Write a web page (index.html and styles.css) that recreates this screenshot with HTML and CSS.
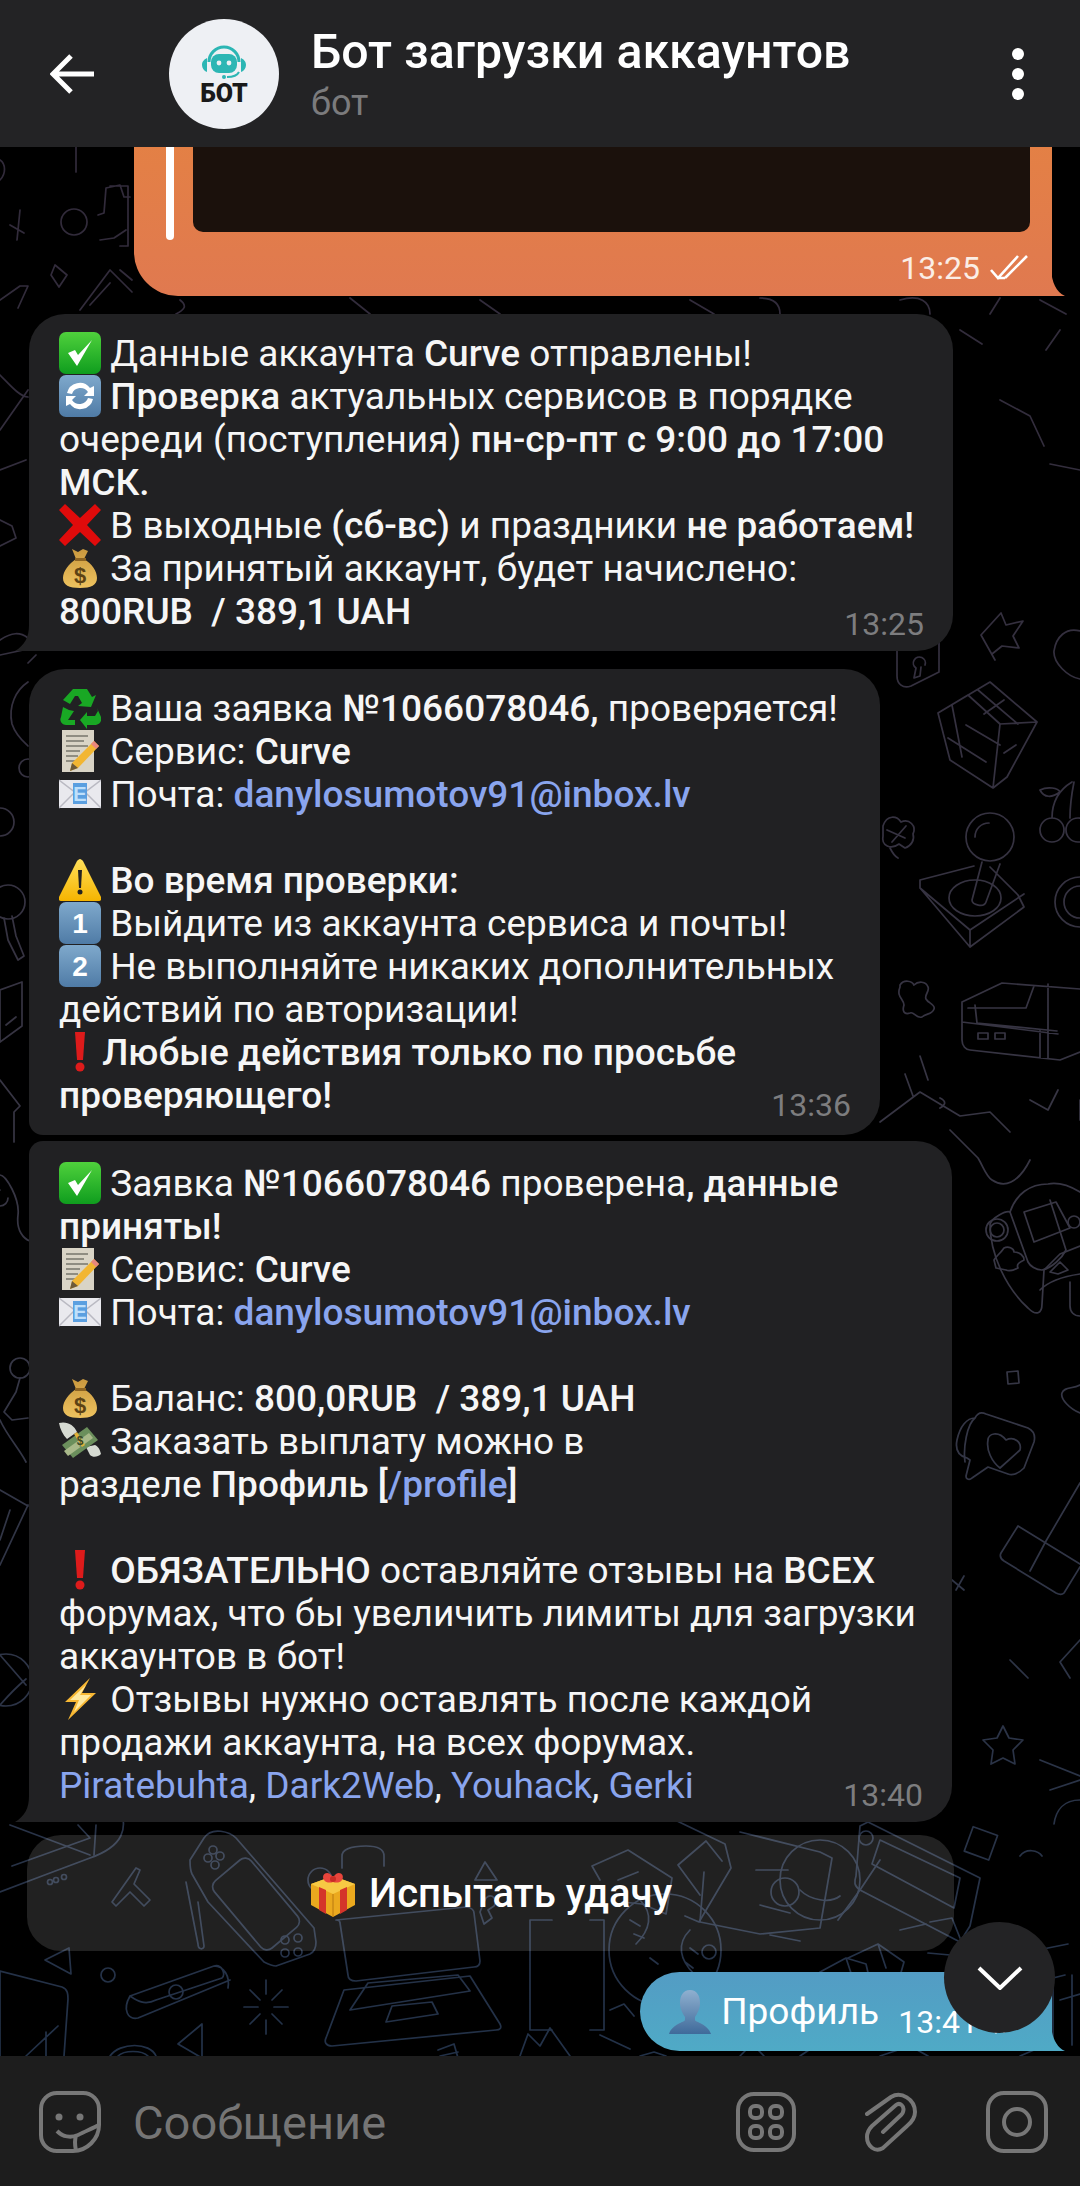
FILE: index.html
```html
<!DOCTYPE html>
<html lang="ru">
<head>
  <meta charset="UTF-8" />
  <meta name="viewport" content="width=device-width, initial-scale=1.0" />
  <title>Бот загрузки аккаунтов</title>
  <link rel="stylesheet" href="styles.css">
</head>
<body>
  <!-- emoji set -->
  <svg class="defs" width="0" height="0">
    <defs>
      <linearGradient id="gGreen" x1="0" y1="0" x2="0" y2="1"><stop offset="0" stop-color="#4fd13c"/><stop offset="1" stop-color="#0f9d1e"/></linearGradient>
      <linearGradient id="gBlue" x1="0" y1="0" x2="0" y2="1"><stop offset="0" stop-color="#7fa9cc"/><stop offset="1" stop-color="#4f7ba6"/></linearGradient>
      <linearGradient id="gPerson" x1="0" y1="0" x2="0" y2="1"><stop offset="0" stop-color="#8fb0d0"/><stop offset="1" stop-color="#3f6a9a"/></linearGradient>
      <linearGradient id="gBag" x1="0" y1="0" x2="0" y2="1"><stop offset="0" stop-color="#c9983e"/><stop offset="1" stop-color="#eec35f"/></linearGradient>
      <linearGradient id="gWarn" x1="0" y1="0" x2="0" y2="1"><stop offset="0" stop-color="#ffe05a"/><stop offset="1" stop-color="#f5b400"/></linearGradient>
      <linearGradient id="gDoodle" gradientUnits="userSpaceOnUse" x1="0" y1="147" x2="0" y2="2056"><stop offset="0" stop-color="#312a3a"/><stop offset=".6" stop-color="#383745"/><stop offset="1" stop-color="#223148"/></linearGradient>

      <symbol id="e-check" viewBox="0 0 42 42"><rect width="42" height="42" rx="7" fill="url(#gGreen)"/><path d="M9 21l9 13L33 8l-14 15-3-5z" fill="#fff"/></symbol>
      <symbol id="e-sync" viewBox="0 0 42 42"><rect width="42" height="42" rx="7" fill="url(#gBlue)"/><path d="M8 18a13 13 0 0 1 23-5l4-2v10H25l4-4a9 9 0 0 0-16 2zM34 24a13 13 0 0 1-23 5l-4 2V21h10l-4 4a9 9 0 0 0 16-2z" fill="#fff"/></symbol>
      <symbol id="e-cross" viewBox="0 0 42 42"><path d="M6 0l15 14L36 0l6 6-14 15 14 15-6 6-15-14L6 42l-6-6 14-15L0 6z" fill="#e00b0b"/></symbol>
      <symbol id="e-bag" viewBox="0 0 42 42"><path d="M13 2l6 3 5-3 5 2-4 8c8 5 13 12 13 19 0 7-6 10-17 10S4 38 4 31c0-7 6-14 13-19z" fill="url(#gBag)"/><path d="M16 11h11v3H16z" fill="#8d6422"/><text x="21" y="36" class="emo-text" font-size="22" fill="#5c4214" text-anchor="middle">$</text></symbol>
      <symbol id="e-recycle" viewBox="0 0 42 42"><path d="M14 2h14l5 8 4-2-5 12-13-1 4-3-4-7h-3l-5 8L4 13zM4 20l6 3 5 1-6 9h7v5H7c-4 0-7-4-5-8zM38 21l4 9c1 4-1 7-5 8h-9v4l-7-9 7-8v4h8l3-5z" fill="#19a824"/></symbol>
      <symbol id="e-memo" viewBox="0 0 42 42"><rect x="3" width="32" height="42" fill="#d9d4c6"/><path d="M7 6h22M7 11h18M7 16h22M7 21h14M7 26h12M7 31h10" stroke="#77756c" stroke-width="1.4"/><path d="M35 11l5 5-21 22-8 3 2-8z" fill="#f2b632"/><path d="M35 11l5 5-3 3-5-5z" fill="#e8877d"/><path d="M11 41l2-8 6 5z" fill="#6d5a3a"/></symbol>
      <symbol id="e-mail" viewBox="0 0 42 42"><rect y="7" width="42" height="28" fill="#e9e9ee"/><path d="M0 7l21 16L42 7M0 35l15-15M42 35L27 20" fill="none" stroke="#b9b9c2" stroke-width="1.5"/><rect x="14" y="10" width="14" height="21" fill="#5b9fe0"/><text x="21" y="28" class="emo-text" font-size="20" fill="#bfe0fb" text-anchor="middle">E</text></symbol>
      <symbol id="e-warn" viewBox="0 0 42 42"><path d="M21 0c1 0 2 1 3 2l18 36c1 2 0 4-2 4H2c-2 0-3-2-2-4L18 2c1-1 2-2 3-2z" fill="url(#gWarn)"/><path d="M19 11h4l-1 18h-2z" fill="#222"/><circle cx="21" cy="33" r="2.5" fill="#222"/></symbol>
      <symbol id="e-one" viewBox="0 0 42 42"><rect width="42" height="42" rx="7" fill="url(#gBlue)"/><text x="21" y="31" class="emo-text" font-size="28" fill="#fff" text-anchor="middle">1</text></symbol>
      <symbol id="e-two" viewBox="0 0 42 42"><rect width="42" height="42" rx="7" fill="url(#gBlue)"/><text x="21" y="31" class="emo-text" font-size="28" fill="#fff" text-anchor="middle">2</text></symbol>
      <symbol id="e-excl" viewBox="0 0 42 42"><path d="M16 1h10l-2 28h-6z" fill="#dd1b1b"/><circle cx="21" cy="36" r="4.5" fill="#dd1b1b"/></symbol>
      <symbol id="e-wings" viewBox="0 0 42 42"><path d="M0 3c8-2 15 2 18 9L8 19C4 15 1 9 0 3zM42 34c-3 3-8 4-11 1l-4-8 9-2c4 2 5 5 6 9z" fill="#d6dad2"/><path d="M3 25L28 7l11 13-25 18z" fill="#6b8f5c"/><path d="M5 31L30 13l4 5-25 18z" fill="#a9b98a"/><path d="M15 14l8 13 3-2-8-13z" fill="#e0b13a"/><text x="21" y="25" class="emo-text" font-size="12" fill="#3b4a2a" text-anchor="middle">$</text></symbol>
      <symbol id="e-bolt" viewBox="0 0 42 42"><path d="M31 0L6 24h11L9 42l28-27H23z" fill="#f7b733"/><path d="M27 7L11 22h9l-5 12 17-17H21z" fill="#ffe9a0"/></symbol>
      <symbol id="e-gift" viewBox="0 0 48 48"><path d="M2 15l22-8 22 8v21L24 48 2 36z" fill="#eba91e"/><path d="M2 15l22 10 22-10-22-8z" fill="#f7c944"/><path d="M24 25v23" stroke="#b87810" stroke-width="1"/><path d="M10 18l7 3v24l-7-4zM31 21l7-3v23l-7 4z" fill="#d4342a"/><path d="M15 11c-3-5 2-9 6-6l3 3 3-3c4-3 9 1 6 6-2 3-6 3-9 2-3 1-7 1-9-2z" fill="#e8453c"/><circle cx="24" cy="10" r="3" fill="#c72c26"/></symbol>
      <symbol id="e-person" viewBox="0 0 44 44"><path d="M22 0c7 0 10 6 10 13 0 6-3 11-5 14v3c0 2 13 4 16 14H1c3-10 16-12 16-14v-3c-2-3-5-8-5-14C12 6 15 0 22 0z" fill="url(#gPerson)"/></symbol>
    </defs>
  </svg>

  <div class="phone">
    <!-- wallpaper -->
    <svg class="doodles" viewBox="0 0 1080 2186" width="1080" height="2186" fill="none" stroke="url(#gDoodle)" stroke-width="1.7" stroke-linejoin="round" stroke-linecap="round">
      <!-- top strip -->
      <path d="M76 147v25"/>
      <path d="M0 160c6 4 6 14 0 20"/>
      <path d="M10 225l14 8M20 210l-3 30"/>
      <circle cx="74" cy="222" r="13"/>
      <path d="M98 215l6-2 2-25 14-3 4 12 6 0M100 240l14-2 12-8M110 186h18v60h-8"/>
      <path d="M55 265l12 10-8 12-8-12z"/>
      <path d="M0 300l20-14h8l-10 22M80 310l30-40 22 22M90 305l20-22M120 270l12 10"/>
      <path d="M180 300c8 6 4 10-4 14M350 298l20 16M480 300l20 14M690 300l24 14M760 298c16 0 20 8 20 16M900 300c20-6 30 2 30 14M1000 298l-10 16M1040 300l26 14"/>
      <!-- left strip -->
      <path d="M0 375c10 10 20 22 28 22M0 430l28-40M0 470l26-10"/>
      <path d="M0 520l12 6 4 12-16 8"/>
      <path d="M0 640c12-8 20-8 28-2M0 655l28-6M36 655l-8 8"/>
      <path d="M28 682c-12 8-20 24-16 42 4 12 14 20 16 22"/>
      <circle cx="28" cy="768" r="9"/>
      <circle cx="0" cy="822" r="14"/>
      <circle cx="8" cy="902" r="17"/>
      <path d="M12 916l4 20 8 20-6 4-10-20-4-22"/>
      <path d="M0 990l22-8v44l-22 16zM6 1025l10-8"/>
      <path d="M0 1080l20 26-6 6v30"/>
      <path d="M0 1175c6 0 20 24 18 40-2 16 6 24 12 26M0 1190a8 8 0 1 0 8 8"/>
      <circle cx="20" cy="1368" r="10"/>
      <path d="M20 1378l-4 14-12 20 8 8 16-2M0 1420c6 14 20 30 26 42"/>
      <path d="M0 1490l28 16M0 1565l28-60M0 1540l10-30"/>
      <circle cx="6" cy="1680" r="26"/><path d="M0 1655c14 16 26 30 26 30M0 1705c14-16 26-26 26-26"/>
      <!-- right column -->
      <path d="M960 330l22 14M1060 330l-14 20M1000 400l30 16 14 30M1080 470l-30-6"/>
      <path d="M897 630v46c0 8 6 13 14 10l28-14v-42M925 665a6 6 0 1 0-9 3l-2 10 6-2 1-9"/>
      <path d="M995 660l-14-25 20-22 5 12 17-4-10 15 6 12-17-2-10 8"/>
      <path d="M1080 631c-14-4-24 6-26 20-1 12 14 26 26 28"/>
      <path d="M938 713l52-31 47 40-30 55-14 11-43-28zM938 713l30-18 32 29-7 64M938 713l12 47M968 695l32 29M952 705l10 52M966 725l34 20M948 738l38 24M978 690l40 34M1000 724l37-2M1004 700l-20 14M1016 745l-12 8"/>
      <path d="M1040 830a12 12 0 1 0 24 0 12 12 0 1 0-24 0M1066 830a12 12 0 1 0 24 0 12 12 0 1 0-24 0M1052 818c0-20 10-30 20-36M1070 818c0-14 2-26 4-36M1040 790c8-4 18-2 20 2-8 6-16 6-20-2z"/>
      <path d="M883 826c4-12 14-10 18-4 8-4 16 4 12 12 2 6-2 12-8 14l-6-4c-8 6-18 2-16-8zM890 848c2 4 4 8 8 10M887 830l18 8M906 826l-14 16"/>
      <circle cx="990" cy="837" r="24"/><path d="M975 837c0-8 6-14 14-14"/>
      <path d="M982 862l-10 38c0 5 12 8 14 2l14-38M920 880l54-14M920 880v8l50 59 54-40-6-12-28-28M920 888l50 42 54-36M970 930v17"/>
      <ellipse cx="975" cy="898" rx="26" ry="18"/>
      <circle cx="1080" cy="902" r="25"/><circle cx="1080" cy="902" r="16"/>
      <path d="M900 985c4-6 12-4 14 0 4-4 12-4 14 2 2 4-4 8-2 12s10 6 8 10c-2 6-8 4-12 8-6 2-8-6-12-4-6 2-8-2-6-8 0-6-8-8-4-18z"/>
      <path d="M962 1002l40-19 78 6M962 1002v38c0 6 4 10 8 10l90 10 20-8M968 1008h58l8-22M975 1005l2 18 80 8M962 1022l96 12M1040 1030v28M1048 984v74"/>
      <rect x="978" y="1033" width="10" height="6"/><rect x="995" y="1033" width="10" height="6"/>
      <path d="M880 1122l40-30 40 24 30-4 20 20M905 1074l8 22M920 1056l8 24"/>
      <path d="M1030 1100l18 10 10-20M1080 1100v20M940 1098c8 4 4 8 0 10"/>
      <path d="M950 1130l28 28c6 10 8 18 14 22 12 8 26 4 38-20"/>
      <path d="M1080 1192c-10-6-22-10-32-8-18 0-32 10-38 28-4-2-18 6-20 12 0 30 16 64 38 84 8 8 14 6 14-4l2-34 16-16 20-8"/>
      <circle cx="997" cy="1230" r="11"/><circle cx="997" cy="1230" r="7"/>
      <path d="M1010 1212l18 50c2 4 8 8 14 8 10-2 20-12 24-20l-16-50"/>
      <path d="M1024 1212l32-10 14 26-36 14z"/>
      <path d="M1004 1248c4-2 10 0 10 4 6 0 10 4 10 8-4 2-8 4-6 8-4 2-8 4-12 2l-10-2-2-8c2-4 6-6 10-12z"/>
      <circle cx="1074" cy="1222" r="6"/>
      <path d="M1060 1262l8 8-10 4-8-2zM1040 1290c10-10 26-14 40-16M1070 1282v24c0 6 4 10 10 10"/>
      <path d="M1007 1372l11-1 1 12-11 1z"/>
      <path d="M1080 1385c-8 4-16 2-18 8-2 6 8 16 18 20"/>
      <path d="M975 1418c-8 0-15 8-18 22-2 10 2 16 10 18l3 2-4 16c0 4 4 4 6 2l16-11 20 7c6 2 12-2 16-6l10-26c2-8-2-12-6-14l-42-14c-4-2-8-2-11 4zM975 1418c-8 6-12 30-10 44"/>
      <path d="M988 1440c0-6 10-10 18 0 8-4 16 2 14 10l-20 18c-8-6-14-18-12-28z"/>
      <path d="M1018 1526l-17 27c-2 4 0 6 3 8l52 32c4 2 6 2 8 0l16-26M1018 1526l62 38M1046 1541l-16 30M1046 1541l34-58"/>
      <path d="M952 1580l12 10M964 1576l-8 14"/>
      <path d="M1010 1660l18 18M1080 1640l-20 22 10 16"/>
      <path d="M1003 1726l6 12 14 2-10 10 2 14-12-6-12 6 2-14-10-10 14-2z"/>
      <path d="M1040 1760l40 16M1050 1790l30-10"/>
      <rect x="968" y="1830" width="26" height="26" transform="rotate(20 980 1843)"/>
      <path d="M1080 1800c-16 0-24 10-26 24"/>
      <!-- bottom band -->
      <path d="M0 1892l42-16 48-18M12 1866l78-28-12-13M90 1858c34-12 38-30 30-50"/>
      <path d="M10 1825l80 30"/>
      <circle cx="50" cy="1882" r="2.5"/><circle cx="56" cy="1880" r="2.5"/><circle cx="64" cy="1877" r="2.5"/>
      <path d="M96 1825l-2 30"/>
      <path d="M112 1902l24-34 4 2-6 14 16 16-6 6-14-14-14 14z"/>
      <path d="M190 1860l14-22c8-12 26-6 32 0l78 90 2 14c0 6-2 10-6 12l-34 12c-4 0-8-2-12-4l-56-60-16-28c-2-4-2-8-2-14z"/>
      <rect x="232" y="1860" width="48" height="88" rx="8" transform="rotate(-40 256 1904)"/>
      <path d="M186 1882l12 62c0 6 6 6 6 2l-6-44"/>
      <circle cx="213" cy="1850" r="4"/><circle cx="220" cy="1856" r="4"/><circle cx="208" cy="1858" r="4"/><circle cx="215" cy="1865" r="4"/>
      <circle cx="285" cy="1940" r="4"/><circle cx="298" cy="1938" r="4"/><circle cx="285" cy="1953" r="4"/><circle cx="298" cy="1952" r="4"/>
      <path d="M342 1868v-12c0-6 8-10 24-10 14 0 18 4 18 10v10"/>
      <circle cx="320" cy="1880" r="12"/>
      <path d="M45 1960l24-12 2 26zM475 1880l10-18 12 18z"/>
      <path d="M0 1971l62 16c6 2 6 8 6 12l-4 57M0 1971v85M26 2056l32-30M46 2056v-24"/>
      <circle cx="108" cy="1975" r="7"/>
      <path d="M130 1996l84-30c8-2 12 8 8 12l-66 22c-12 6-20 0-26-4zM130 1996c-8 14-2 24 8 22l92-38M214 1966c10 0 16 10 14 22"/>
      <circle cx="176" cy="1992" r="7"/>
      <path d="M266 1980v14M266 2020v14M244 2007h14M274 2007h14M250 1990l10 10M282 1990l-10 10M250 2024l10-10M282 2024l-10-10"/>
      <path d="M178 2044l24-20 0 34z"/>
      <path d="M110 2056c10-14 40-14 46 0M118 2056c6-6 24-6 30 0"/>
      <path d="M336 1920l130-13c6 0 8 4 8 6l6 48c0 4-2 6-6 6l-118 14c-6 0-8-2-8-6l-8-52c0-2-2-3-4-3zM344 1990l126-14 30 48c2 4 0 6-4 6l-164 16c-6 0-8-4-6-8zM350 2010l18-27 90-8 12 16zM386 2022l6-16 40-4 6 12z"/>
      <path d="M438 2050l16-6 4 14M440 2056l18-4"/>
      <path d="M486 1898c6-6 12 2 8 8l-6 4 4 8-8 6-4-12 4-10 2-4z"/>
      <path d="M530 2030v-110h22M590 1920h14v110h-14M530 2030h22"/>
      <circle cx="665" cy="1950" r="56"/>
      <path d="M640 1900c14 14 10 30-4 44M690 1930c-14 14-10 30 4 44M630 1920l10 6M634 1934l10 4M650 1958l8 6M690 1948l8 6M685 1962l8 6"/>
      <circle cx="709" cy="1952" r="7"/>
      <path d="M600 1880l-8-14 36-16 44 28-6 36-24-10-20-2M618 1880l20-8"/>
      <path d="M675 1820l50 24 6 24-32 54-14-6M700 1895l-22-30 28-24 16 20"/>
      <path d="M740 1832l80 20 12 6-12 70-60 6-60-12 4-50M756 1870h32M760 1905l30 8M770 1935l30 6"/>
      <circle cx="820" cy="1880" r="40"/>
      <path d="M800 1890c10 10 30 14 40 6"/><circle cx="866" cy="1838" r="7"/>
      <path d="M838 1920l22-30 20-30"/>
      <circle cx="785" cy="1892" r="14"/>
      <path d="M868 1822l112 56-10 48-10 16-100-52c-6-4-6-8-4-14l4-50zM880 1840l80 38-6 30-82-44z"/>
      <path d="M930 1922l22-4 8 20M962 1942c6-4 12 0 16 4M950 1955l-22-2"/>
      <path d="M820 1972l26-14 20 6 6 26-20 18-32-8zM846 1958l10 30M826 1984l30 4"/>
      <path d="M848 1958l30-14 26 18-8 28-28 14M878 1944l8 24"/>
      <path d="M900 1930l26-6M1020 1856c6-8 18-6 22 0M1068 1944l-40 8M1065 1975l-12 3v70M1072 1975v70M1060 2000l20-6"/>
      <path d="M640 2056l14-4 12 4M740 2056l12-12 12 12M800 2056l12-8M880 2056l30-10 18 10M1020 2056l14-6"/>
      <path d="M520 2056l8-22 12 12 10-18 20 28"/>
      <path d="M610 2010l14-6 10 12M600 2035l30 14"/>
    </svg>

    <header class="topbar">
      <svg class="back-icon" viewBox="0 0 44 40" width="44" height="40" fill="none" stroke="#fff" stroke-width="5"><path d="M21 2L3 20l18 18M3 20h41"/></svg>
      <div class="avatar">
        <svg class="robot" viewBox="0 0 46 36" width="46" height="36">
          <path d="M8 18a15 15 0 0 1 30 0" fill="none" stroke="#2cb6b4" stroke-width="3"/>
          <rect x="10" y="10" width="26" height="19" rx="8" fill="#2cb6b4"/>
          <circle cx="18" cy="19" r="2.4" fill="#eef0f4"/><circle cx="28" cy="19" r="2.4" fill="#eef0f4"/>
          <path d="M1 21c0-4 3-6 5-7v14c-3-1-5-4-5-7zM45 21c0-4-3-6-5-7v14c3-1 5-4 5-7z" fill="#2cb6b4"/>
          <path d="M38 28c-2 4-6 5-12 5" fill="none" stroke="#2cb6b4" stroke-width="2"/><circle cx="23" cy="33" r="2" fill="#2cb6b4"/>
        </svg>
        <span class="avatar-label">БОТ</span>
      </div>
      <div class="peer">
        <div class="peer-name">Бот загрузки аккаунтов</div>
        <div class="peer-status">бот</div>
      </div>
      <div class="menu-dots"><i></i><i></i><i></i></div>
    </header>

    <main class="chat">
      <div class="msg out orange">
        <div class="quote-row">
          <div class="quote-bar"></div>
          <div class="quote-image"></div>
        </div>
        <span class="meta out-meta">13:25
          <svg viewBox="0 0 42 26" width="42" height="26" fill="none" stroke="#fff" stroke-width="2.6"><path d="M1 15l7 8L28 1M15 23L37 1M8 23l7 0"/></svg>
        </span>
      </div>

      <div class="msg in first tail-left">
        <svg class="emo"><use href="#e-check"/></svg> Данные аккаунта <b>Curve</b> отправлены!<br>
        <svg class="emo"><use href="#e-sync"/></svg> <b>Проверка</b> актуальных сервисов в порядке<br>
        очереди (поступления) <b>пн-ср-пт с 9:00 до 17:00</b><br>
        <b>МСК.</b><br>
        <svg class="emo"><use href="#e-cross"/></svg> В выходные <b>(сб-вс)</b> и праздники <b>не работаем!</b><br>
        <svg class="emo"><use href="#e-bag"/></svg> За принятый аккаунт, будет начислено:<br>
        <b>800RUB&nbsp; / 389,1 UAH</b>
        <span class="meta">13:25</span>
      </div>

      <div class="msg in second">
        <svg class="emo"><use href="#e-recycle"/></svg> Ваша заявка <b>№1066078046,</b> проверяется!<br>
        <svg class="emo"><use href="#e-memo"/></svg> Сервис: <b>Curve</b><br>
        <svg class="emo"><use href="#e-mail"/></svg> Почта: <a class="link med">danylosumotov91@inbox.lv</a><br>
        <br>
        <svg class="emo"><use href="#e-warn"/></svg> <b>Во время проверки:</b><br>
        <svg class="emo"><use href="#e-one"/></svg> Выйдите из аккаунта сервиса и почты!<br>
        <svg class="emo"><use href="#e-two"/></svg> Не выполняйте никаких дополнительных<br>
        действий по авторизации!<br>
        <svg class="emo tight"><use href="#e-excl"/></svg> <b>Любые действия только по просьбе</b><br>
        <b>проверяющего!</b>
        <span class="meta">13:36</span>
      </div>

      <div class="msg in third tail-left">
        <svg class="emo"><use href="#e-check"/></svg> Заявка <b>№1066078046</b> проверена<b>, данные</b><br>
        <b>приняты!</b><br>
        <svg class="emo"><use href="#e-memo"/></svg> Сервис: <b>Curve</b><br>
        <svg class="emo"><use href="#e-mail"/></svg> Почта: <a class="link med">danylosumotov91@inbox.lv</a><br>
        <br>
        <svg class="emo"><use href="#e-bag"/></svg> Баланс: <b>800,0RUB&nbsp; / 389,1 UAH</b><br>
        <svg class="emo"><use href="#e-wings"/></svg> Заказать выплату можно в<br>
        разделе <b>Профиль [</b><a class="link med">/profile</a><b>]</b><br>
        <br>
        <svg class="emo"><use href="#e-excl"/></svg> <b>ОБЯЗАТЕЛЬНО</b> оставляйте отзывы на <b>ВСЕХ</b><br>
        форумах, что бы увеличить лимиты для загрузки<br>
        аккаунтов в бот!<br>
        <svg class="emo"><use href="#e-bolt"/></svg> Отзывы нужно оставлять после каждой<br>
        продажи аккаунта, на всех форумах.<br>
        <a class="link">Piratebuhta</a>, <a class="link">Dark2Web</a>, <a class="link">Youhack</a>, <a class="link">Gerki</a>
        <span class="meta">13:40</span>
      </div>

      <div class="kb-button"><svg class="emo gift"><use href="#e-gift"/></svg> Испытать удачу</div>

      <div class="msg out blue">
        <svg class="emo person"><use href="#e-person"/></svg> Профиль
        <span class="meta out-meta">13:41
          <svg viewBox="0 0 42 26" width="42" height="26" fill="none" stroke="#fff" stroke-width="2.6"><path d="M1 15l7 8L28 1M15 23L37 1"/></svg>
        </span>
      </div>
    </main>

    <button class="to-bottom">
      <svg viewBox="0 0 46 24" width="46" height="24" fill="none" stroke="#fff" stroke-width="4"><path d="M2 2l21 20L44 2"/></svg>
    </button>

    <footer class="composer">
      <svg class="icon-sticker" viewBox="0 0 62 62" width="62" height="62" fill="none" stroke="#777" stroke-width="4">
        <path d="M18 2h26c9 0 16 7 16 16v16C60 48 48 60 34 60H18C9 60 2 53 2 44V18C2 9 9 2 18 2z"/>
        <path d="M18 40c6 6 14 7 21 4 6-3 15-7 21-10M37 45c-2 5-1 10 0 15"/>
        <circle cx="20" cy="26" r="3.5" fill="#777" stroke="none"/><circle cx="41" cy="26" r="3.5" fill="#777" stroke="none"/>
      </svg>
      <span class="placeholder">Сообщение</span>
      <div class="composer-icons">
        <svg viewBox="0 0 60 60" width="60" height="60" fill="none" stroke="#777" stroke-width="4">
          <rect x="2" y="2" width="56" height="56" rx="16"/>
          <rect x="14" y="14" width="12" height="12" rx="5"/><rect x="34" y="14" width="12" height="12" rx="5"/>
          <rect x="14" y="34" width="12" height="12" rx="5"/><rect x="34" y="34" width="12" height="12" rx="5"/>
        </svg>
        <svg viewBox="0 0 52 60" width="52" height="60" fill="none" stroke="#777" stroke-width="4" stroke-linecap="round">
          <path d="M2 22L26 5c10-6 24 2 24 15 0 6-3 10-8 14L18 56c-8 5-16-2-16-11 0-4 2-8 5-11L31 13c4-3 9 1 7 7 0 1-1 2-2 3L18 40"/>
        </svg>
        <svg viewBox="0 0 62 62" width="62" height="62" fill="none" stroke="#777" stroke-width="4">
          <rect x="2" y="2" width="58" height="58" rx="16"/><circle cx="31" cy="31" r="13"/>
        </svg>
      </div>
    </footer>
  </div>
</body>
</html>
```

FILE: styles.css
```css
* {
  box-sizing: border-box;
}

body {
  margin: 0;
  background: #000;
  font-family: Roboto, "Liberation Sans", sans-serif;
}

.defs {
  position: absolute;
}

.phone {
  position: relative;
  width: 1080px;
  height: 2186px;
  display: flex;
  flex-direction: column;
  overflow: hidden;
  background: #000;
}

.doodles {
  position: absolute;
  top: 0;
  left: 0;
}

/* top bar */
.topbar {
  position: relative;
  z-index: 2;
  height: 147px;
  flex: none;
  display: flex;
  align-items: center;
  background: #232325;
  padding: 0 56px 0 50px;
}

.back-icon {
  flex: none;
}

.avatar {
  width: 110px;
  height: 110px;
  flex: none;
  margin-left: 75px;
  border-radius: 50%;
  background: #eef0f4;
  display: flex;
  flex-direction: column;
  align-items: center;
  padding-top: 25px;
}

.avatar-label {
  font-size: 25px;
  line-height: 24px;
  font-weight: 900;
  color: #1a1a1a;
  margin-top: 2px;
}

.peer {
  margin-left: 32px;
  flex: 1;
}

.peer-name {
  font-size: 48.25px;
  line-height: 56px;
  font-weight: 500;
  color: #fff;
}

.peer-status {
  font-size: 36px;
  line-height: 42px;
  margin-top: 2px;
  color: #7b7b7d;
}

.menu-dots {
  display: flex;
  flex-direction: column;
  gap: 8px;
}

.menu-dots i {
  width: 12px;
  height: 12px;
  border-radius: 50%;
  background: #fff;
}

/* messages */
.chat {
  position: relative;
  flex: 1;
  min-height: 0;
  overflow: hidden;
  display: flex;
  flex-direction: column;
  justify-content: flex-end;
  align-items: flex-start;
  padding-bottom: 5px;
}

.msg {
  position: relative;
  flex: none;
  font-size: 37px;
  line-height: 43px;
  color: #f6f6f6;
  white-space: nowrap;
}

.msg b,
.kb-button {
  font-weight: 500;
}

.msg.in {
  background: #212123;
  padding: 18px 0 17px 30px;
  margin-left: 29px;
  border-radius: 36px;
}

.msg.first {
  width: 924px;
  height: 337px;
  margin-bottom: 18px;
  border-bottom-left-radius: 0;
}

.msg.second {
  width: 851px;
  height: 466px;
  margin-bottom: 6px;
  border-bottom-left-radius: 14px;
}

.msg.second .meta {
  bottom: 13px;
}

.msg.third {
  width: 923px;
  height: 681px;
  padding-top: 21px;
  margin-bottom: 13px;
  border-top-left-radius: 14px;
  border-bottom-left-radius: 0;
}

.tail-left::after {
  content: "";
  position: absolute;
  left: -14px;
  bottom: 0;
  width: 14px;
  height: 26px;
  background: inherit;
  clip-path: path("M14 0 C14 12 10 20 0 26 L14 26 Z");
}

.meta {
  position: absolute;
  right: 29px;
  bottom: 10px;
  font-size: 32px;
  line-height: 34px;
  color: #7d7d7f;
}

.link {
  color: #8aa5ee;
}

.link.med {
  font-weight: 500;
}

.emo {
  width: 42px;
  height: 42px;
  vertical-align: -8px;
}

.emo.tight {
  margin-right: -8px;
}

.emo-text {
  font-family: "Liberation Sans", sans-serif;
  font-weight: 700;
  stroke: none;
}

/* outgoing */
.msg.out {
  align-self: flex-end;
  margin-right: 28px;
  color: #fff;
}

.msg.out::after {
  content: "";
  position: absolute;
  right: -13px;
  bottom: 0;
  width: 14px;
  height: 26px;
  clip-path: path("M0 0 C1 12 5 22 14 26 L0 26 Z");
}

.orange {
  width: 918px;
  height: 300px;
  margin-bottom: 18px;
  padding: 0 22px 56px 32px;
  background: linear-gradient(#e7873a, #e07950);
  border-radius: 0 0 0 44px;
  display: flex;
  flex-direction: column;
  justify-content: flex-end;
}

.msg.orange::after {
  background: #e07950;
}

.quote-row {
  display: flex;
  align-items: flex-start;
  gap: 19px;
}

.quote-bar {
  width: 8px;
  height: 208px;
  flex: none;
  background: #fff;
  border-radius: 0 0 4px 4px;
}

.quote-image {
  flex: 1;
  height: 200px;
  background: #1b110c;
  border-radius: 0 0 10px 10px;
}

.out-meta {
  right: 20px;
  bottom: 11px;
  color: #fbeee6;
  display: flex;
  align-items: center;
  gap: 10px;
  white-space: nowrap;
}

.blue {
  width: 412px;
  height: 79px;
  padding-left: 28px;
  line-height: 80px;
  background: linear-gradient(#539cc4, #4faac6);
  border-radius: 40px 0 0 40px;
}

.msg.blue::after {
  background: #4faac6;
}

.msg.blue .out-meta {
  right: 22px;
  bottom: 12px;
  color: #fff;
}

.emo.person {
  width: 44px;
  height: 44px;
  vertical-align: -10px;
}

/* bot keyboard */
.kb-button {
  flex: none;
  width: 927px;
  height: 116px;
  margin: 0 0 21px 27px;
  background: rgba(255, 255, 255, 0.13);
  border-radius: 34px;
  display: flex;
  align-items: center;
  justify-content: center;
  gap: 12px;
  font-size: 40px;
  color: #fff;
}

.emo.gift {
  width: 48px;
  height: 48px;
}

.to-bottom {
  position: absolute;
  left: 944px;
  top: 1922px;
  z-index: 3;
  width: 111px;
  height: 111px;
  padding: 0;
  border: none;
  border-radius: 50%;
  background: #232325;
  display: flex;
  align-items: center;
  justify-content: center;
}

/* composer */
.composer {
  position: relative;
  z-index: 2;
  height: 130px;
  flex: none;
  display: flex;
  align-items: center;
  background: #1d1d1d;
  padding: 2px 32px 0 39px;
}

.placeholder {
  margin-left: 32px;
  font-size: 47px;
  color: #757575;
}

.composer-icons {
  margin-left: auto;
  display: flex;
  align-items: center;
  gap: 69px;
}
```
